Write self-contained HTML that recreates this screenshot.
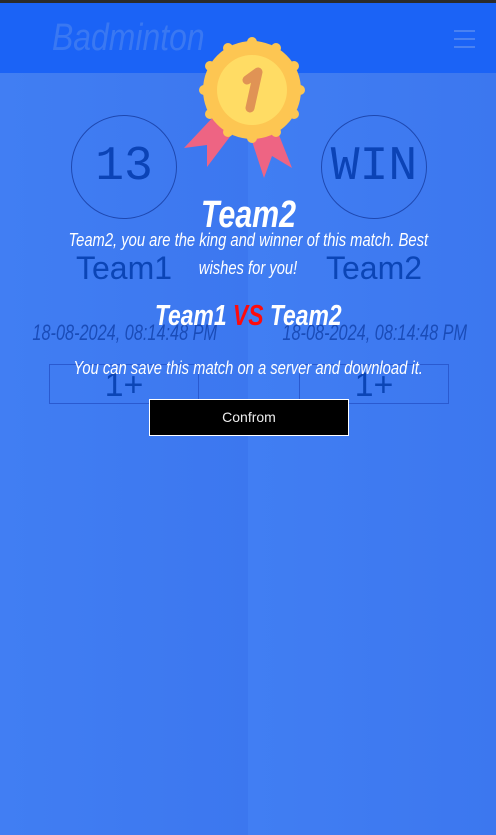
<!DOCTYPE html>
<html><head><meta charset="utf-8"><style>
*{margin:0;padding:0;box-sizing:border-box}
html,body{width:496px;height:835px;overflow:hidden}
body{position:relative;font-family:"Liberation Sans",sans-serif;background:#3f7af0}
.topbar{position:absolute;left:0;top:0;width:496px;height:3px;background:#2b2b2b}
.header{position:absolute;left:0;top:3px;width:496px;height:70px;background:#1b63f6}
.logo{position:absolute;left:52px;top:14px;font-size:38px;font-style:italic;color:#3a78f2;transform:scaleX(.84);transform-origin:left;white-space:nowrap}
.ham{position:absolute;left:454px;width:21px;height:2px;background:#4a82f2}
.half{position:absolute;top:73px;height:762px;width:248px;background:linear-gradient(90deg,#417ef3,#3c77ef)}
.circle{position:absolute;width:106px;height:104px;border:1px solid #1e48b0;border-radius:50%;top:115px;font-family:"Liberation Mono",monospace;font-size:48px;color:#0b43b6;text-align:center;line-height:102px}
.team{position:absolute;top:250px;font-size:32px;color:#0b45b6;width:200px;text-align:center}
.c{position:absolute;left:0;width:100%;text-align:center;white-space:nowrap}
.c span{display:inline-block}
.date{position:absolute;top:320px;width:248px;font-size:22px;color:#1a4cb8;font-style:italic;text-align:center;white-space:nowrap}
.date span{display:inline-block;transform:scaleX(.74)}
.btn{position:absolute;top:364px;width:150px;height:40px;border:1px solid #2a5ad0;font-size:34px;color:#0b45b6;text-align:center;line-height:40px}
.w{color:#fff;font-style:italic}
</style></head><body>
<div class="topbar"></div>
<div class="header"><div class="logo">Badminton</div>
<div class="ham" style="top:27px"></div><div class="ham" style="top:35px"></div><div class="ham" style="top:43px"></div></div>
<div class="half" style="left:0"></div><div class="half" style="left:248px"></div>
<div class="circle" style="left:71px">13</div>
<div class="circle" style="left:321px">WIN</div>
<div class="team" style="left:24px">Team1</div>
<div class="team" style="left:274px">Team2</div>
<div class="date" style="left:0"><span>18-08-2024, 08:14:48 PM</span></div>
<div class="date" style="left:250px"><span>18-08-2024, 08:14:48 PM</span></div>
<div class="btn" style="left:49px">1+</div>
<div class="btn" style="left:299px">1+</div>
<svg style="position:absolute;left:180px;top:34px" width="130" height="150" viewBox="180 34 130 150">
<polygon points="215,115 184,148 207,145 207,167 235,130" fill="#ee6483"/>
<polygon points="250,135 264,178 272,156 292,168 275,125" fill="#ee6483"/>
<g fill="#fdc652">
<circle cx="252" cy="90" r="49"/>
<g transform="translate(252 90)">
<circle cx="0" cy="-48" r="5"/><circle cx="24" cy="-42" r="5"/><circle cx="42" cy="-24" r="5"/><circle cx="48" cy="0" r="5"/><circle cx="42" cy="24" r="5"/><circle cx="24" cy="42" r="5"/><circle cx="0" cy="48" r="5"/><circle cx="-24" cy="42" r="5"/><circle cx="-42" cy="24" r="5"/><circle cx="-48" cy="0" r="5"/><circle cx="-42" cy="-24" r="5"/><circle cx="-24" cy="-42" r="5"/>
</g></g>
<circle cx="252" cy="90" r="35" fill="#ffdc64"/>
<path d="M247 80 L258 72 L250 108" stroke="#e09355" stroke-width="9" fill="none" stroke-linecap="round" stroke-linejoin="round"/>
</svg>
<div class="c w" style="top:194px;font-size:38px;font-weight:bold"><span style="transform:scaleX(.8)">Team2</span></div>
<div class="c w" style="top:230px;font-size:18px"><span style="transform:scaleX(.82)">Team2, you are the king and winner of this match. Best</span></div>
<div class="c w" style="top:258px;font-size:18px"><span style="transform:scaleX(.82)">wishes for you!</span></div>
<div class="c w" style="top:300px;font-size:29px;font-weight:bold"><span style="transform:scaleX(.79)">Team1 <span style="color:#ff0b0b">VS</span> Team2</span></div>
<div class="c w" style="top:358px;font-size:18px"><span style="transform:scaleX(.82)">You can save this match on a server and download it.</span></div>
<div style="position:absolute;left:149px;top:399px;width:200px;height:37px;background:#000;border:1px solid #fff;color:#eee;font-size:14px;text-align:center;line-height:35px">Confrom</div>
</body></html>
